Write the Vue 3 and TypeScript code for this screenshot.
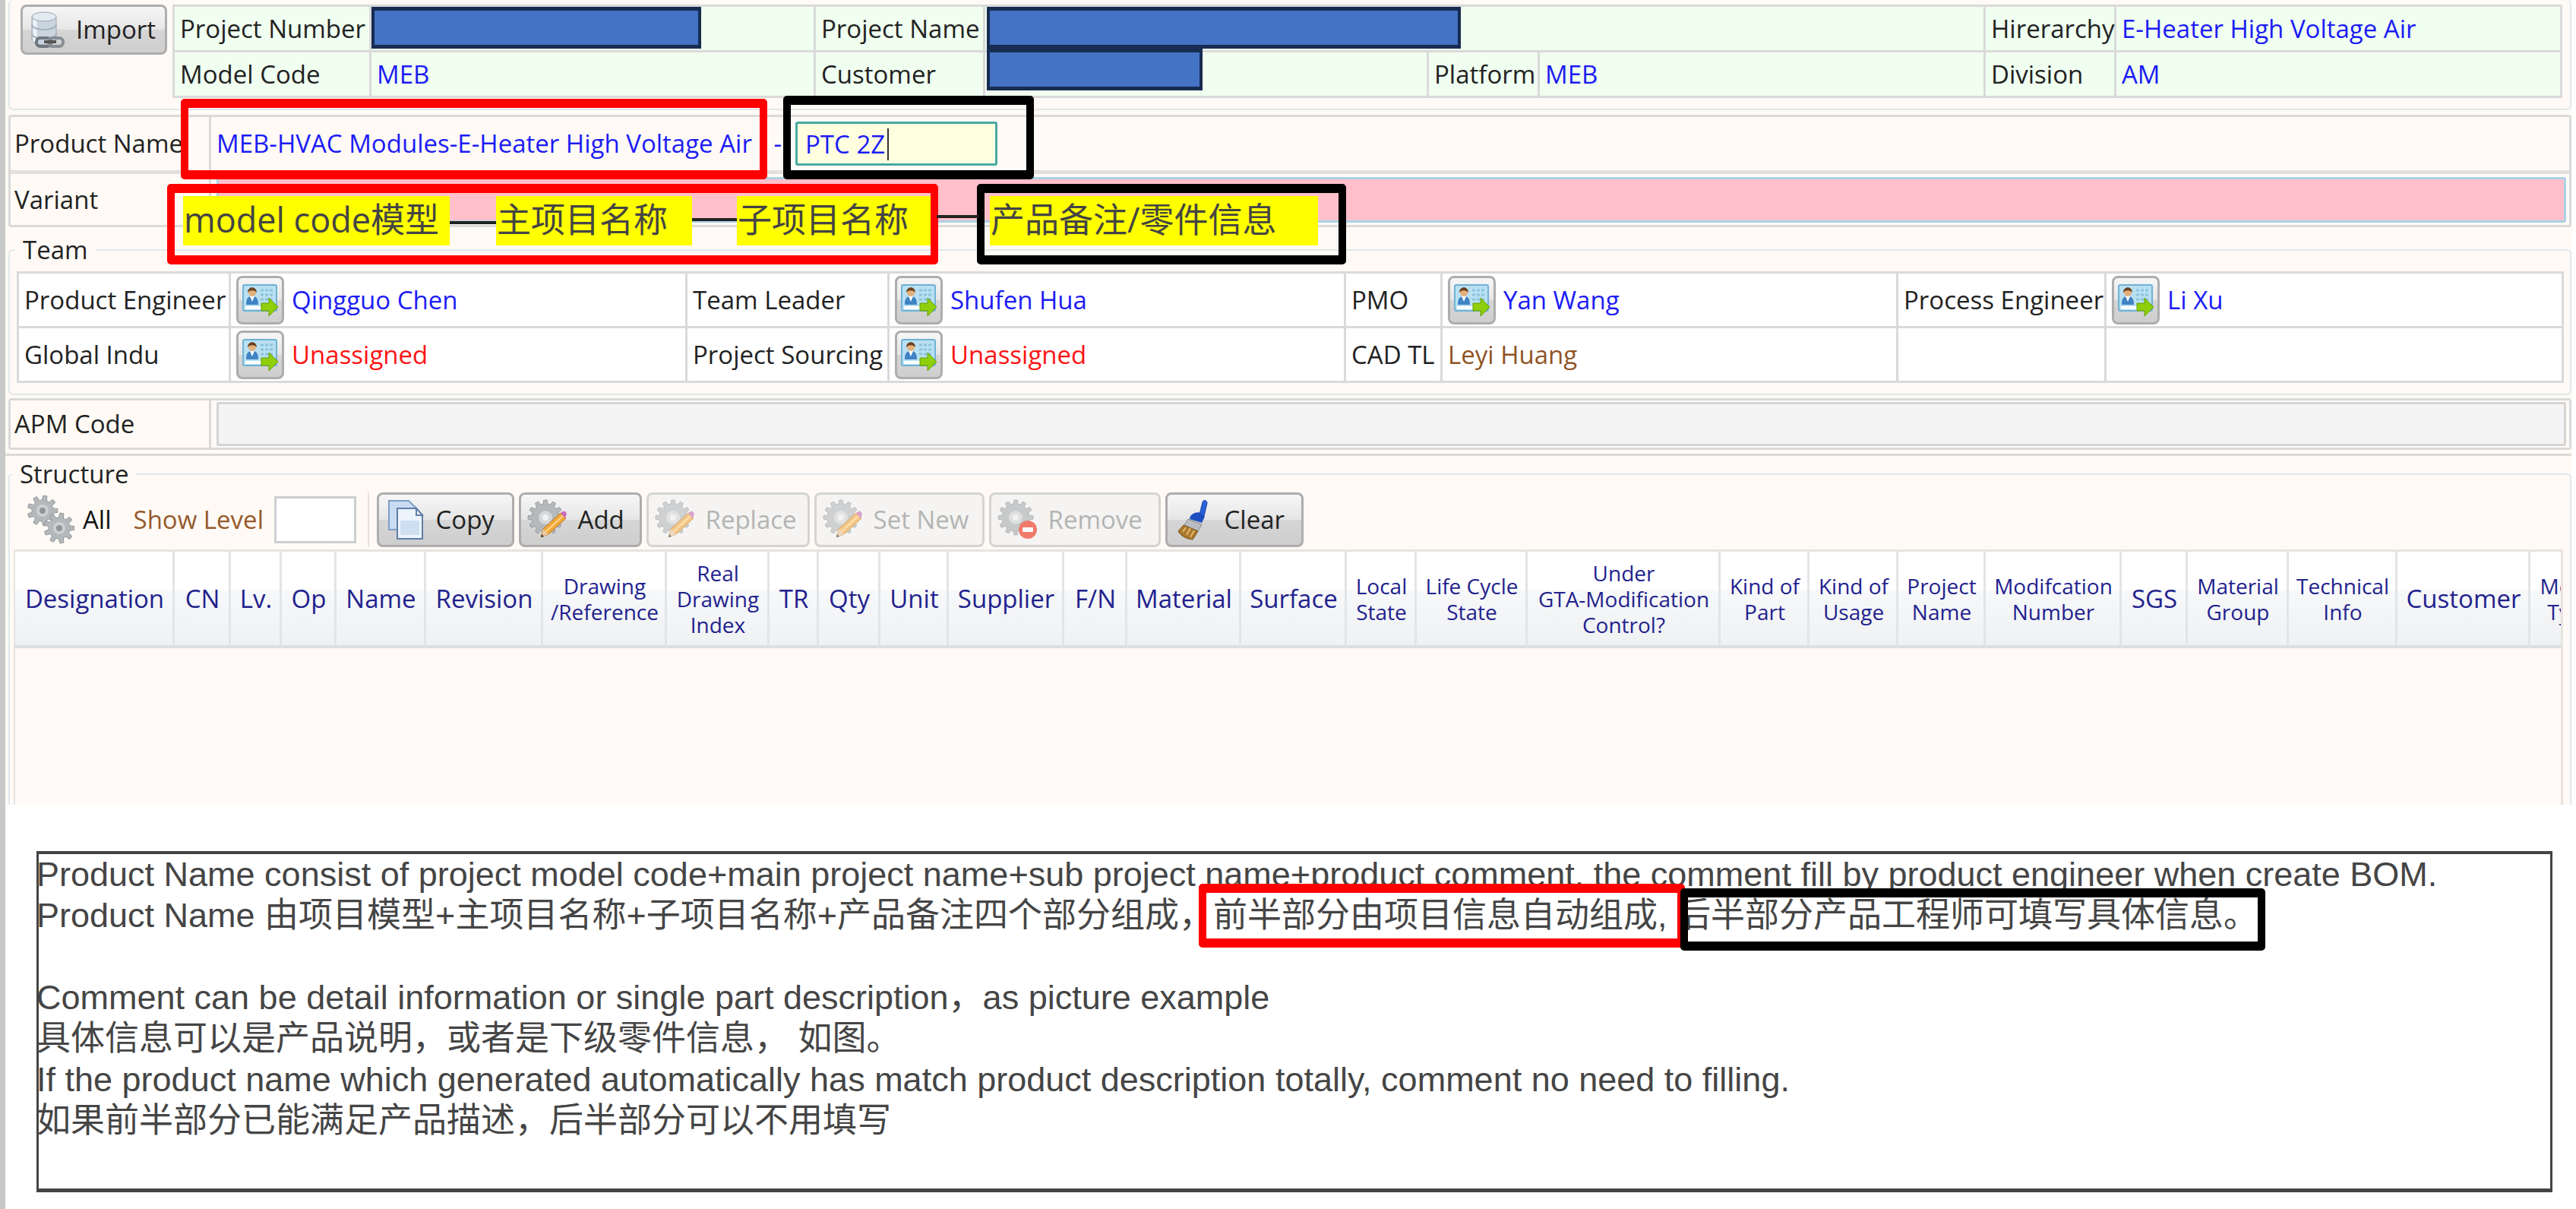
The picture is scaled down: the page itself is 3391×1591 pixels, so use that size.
<script setup lang="ts">
import { ref } from 'vue'

interface Member {
  label: string
  name: string
  tone: 'blue' | 'red' | 'brown'
  picker: boolean
}

interface Column {
  lines: string[]
  width: number
}

interface Tool {
  label: string
  icon: 'copy' | 'edit' | 'remove' | 'brush'
  disabled: boolean
  width: number
}

const comment = ref('PTC 2Z')
const variant = ref('')
const level = ref('')

const team: (Member | null)[][] = [
  [
    { label: 'Product Engineer', name: 'Qingguo Chen', tone: 'blue', picker: true },
    { label: 'Team Leader', name: 'Shufen Hua', tone: 'blue', picker: true },
    { label: 'PMO', name: 'Yan Wang', tone: 'blue', picker: true },
    { label: 'Process Engineer', name: 'Li Xu', tone: 'blue', picker: true },
  ],
  [
    { label: 'Global Indu', name: 'Unassigned', tone: 'red', picker: true },
    { label: 'Project Sourcing', name: 'Unassigned', tone: 'red', picker: true },
    { label: 'CAD TL', name: 'Leyi Huang', tone: 'brown', picker: false },
    null,
  ],
]

const projectCols = [259, 585, 223, 584, 146, 587, 172, 587]
const teamCols = [279, 601, 266, 601, 127, 600, 274, 602]

const tools: Tool[] = [
  { label: 'Copy', icon: 'copy', disabled: false, width: 181 },
  { label: 'Add', icon: 'edit', disabled: false, width: 162 },
  { label: 'Replace', icon: 'edit', disabled: true, width: 215 },
  { label: 'Set New', icon: 'edit', disabled: true, width: 224 },
  { label: 'Remove', icon: 'remove', disabled: true, width: 226 },
  { label: 'Clear', icon: 'brush', disabled: false, width: 182 },
]

const columns: Column[] = [
  { lines: ['Designation'], width: 210 },
  { lines: ['CN'], width: 74 },
  { lines: ['Lv.'], width: 67 },
  { lines: ['Op'], width: 72 },
  { lines: ['Name'], width: 118 },
  { lines: ['Revision'], width: 154 },
  { lines: ['Drawing', '/Reference'], width: 163 },
  { lines: ['Real', 'Drawing', 'Index'], width: 135 },
  { lines: ['TR'], width: 65 },
  { lines: ['Qty'], width: 81 },
  { lines: ['Unit'], width: 90 },
  { lines: ['Supplier'], width: 152 },
  { lines: ['F/N'], width: 83 },
  { lines: ['Material'], width: 150 },
  { lines: ['Surface'], width: 139 },
  { lines: ['Local', 'State'], width: 92 },
  { lines: ['Life Cycle', 'State'], width: 146 },
  { lines: ['Under', 'GTA-Modification', 'Control?'], width: 254 },
  { lines: ['Kind of', 'Part'], width: 117 },
  { lines: ['Kind of', 'Usage'], width: 117 },
  { lines: ['Project', 'Name'], width: 115 },
  { lines: ['Modifcation', 'Number'], width: 179 },
  { lines: ['SGS'], width: 87 },
  { lines: ['Material', 'Group'], width: 133 },
  { lines: ['Technical', 'Info'], width: 143 },
  { lines: ['Customer'], width: 175 },
  { lines: ['Model', 'Type'], width: 108 },
]

/* Outline of a cog: alternating outer and inner points round the centre. */
function cog(cx: number, cy: number, outer: number, inner: number, teeth: number): string {
  const step = (Math.PI * 2) / teeth
  const points: string[] = []
  for (let i = 0; i < teeth; i++) {
    const a = i * step
    const corners: [number, number][] = [
      [-0.32, inner],
      [-0.18, outer],
      [0.18, outer],
      [0.32, inner],
    ]
    for (const [k, r] of corners) {
      const t = a + k * step
      points.push(`${(cx + Math.cos(t) * r).toFixed(1)} ${(cy + Math.sin(t) * r).toFixed(1)}`)
    }
  }
  return `M${points.join('L')}Z`
}

const bigCog = cog(24, 24, 23, 18, 12)
const topCog = cog(20, 20, 20, 14, 9)
const lowCog = cog(42, 43, 20, 14, 9)
</script>

<template>
  <main class="page">
    <div class="form">
      <section class="panel project">
        <button type="button" class="btn import">
          <svg class="ico-db" viewBox="0 0 46 50" aria-hidden="true">
            <path d="M2 8v30c0 4 7 7 16 7s16-3 16-7V8z" fill="#cbd5e0" stroke="#9aa7b6" />
            <path d="M6 12v29" stroke="#eef3f8" stroke-width="5" />
            <path d="M2 18c0 4 7 7 16 7s16-3 16-7M2 30c0 4 7 7 16 7s16-3 16-7" fill="none" stroke="#a3b0bf" stroke-width="2" />
            <ellipse cx="18" cy="8" rx="16" ry="6" fill="#e3eaf1" stroke="#9aa7b6" />
            <rect x="8" y="36" width="19" height="11" rx="5" fill="none" stroke="#6f767d" stroke-width="4" />
            <rect x="24" y="36" width="19" height="11" rx="5" fill="none" stroke="#878e95" stroke-width="4" />
            <path d="M18 41h16" stroke="#555" stroke-width="4" />
          </svg>
          Import
        </button>
        <table class="cells green">
          <colgroup>
            <col v-for="(w, i) in projectCols" :key="i" :style="{ width: w + 'px' }" />
          </colgroup>
          <tbody>
            <tr>
              <th scope="row">Project Number</th>
              <td class="masked"><span class="mask mask-number"></span></td>
              <th scope="row">Project Name</th>
              <td colspan="3" class="masked"><span class="mask mask-name"></span></td>
              <th scope="row">Hirerarchy</th>
              <td class="blue">E-Heater High Voltage Air</td>
            </tr>
            <tr>
              <th scope="row">Model Code</th>
              <td class="blue">MEB</td>
              <th scope="row">Customer</th>
              <td class="masked"><span class="mask mask-customer"></span></td>
              <th scope="row">Platform</th>
              <td class="blue">MEB</td>
              <th scope="row">Division</th>
              <td class="blue">AM</td>
            </tr>
          </tbody>
        </table>
      </section>

      <section class="rows">
        <div class="row product">
          <label class="row-label" for="comment">Product Name</label>
          <div class="row-value">
            <span class="blue auto-name"><span>MEB-HVAC Modules-E-Heater High Voltage Air</span><span>-</span></span>
            <span class="comment-box">
              <input id="comment" v-model="comment" class="comment" type="text" />
              <i class="caret"></i>
            </span>
          </div>
        </div>
        <div class="row variant">
          <label class="row-label" for="variant">Variant</label>
          <div class="row-value"><input id="variant" v-model="variant" class="wide pink" type="text" /></div>
        </div>
      </section>

      <fieldset class="panel team">
        <legend>Team</legend>
        <table class="cells white">
          <colgroup>
            <col v-for="(w, i) in teamCols" :key="i" :style="{ width: w + 'px' }" />
          </colgroup>
          <tbody>
            <tr v-for="(line, r) in team" :key="r">
              <template v-for="(m, c) in line" :key="c">
                <template v-if="m">
                  <th scope="row">{{ m.label }}</th>
                  <td :class="m.tone">
                    <div class="member">
                      <button v-if="m.picker" type="button" class="btn pick" :aria-label="'Choose ' + m.label">
                        <svg class="ico-card" viewBox="0 0 48 44" aria-hidden="true">
                          <rect x="1" y="2" width="44" height="34" rx="2" fill="#b9e0f2" stroke="#6fb2d4" stroke-width="2" />
                          <rect x="4" y="30" width="38" height="4" fill="#fff" />
                          <path d="M24 9h17M24 15h17M24 21h17" stroke="#8cc4de" stroke-width="3" stroke-dasharray="4 2" />
                          <path d="M5 28c0-9 3-11 8-11s8 2 8 11z" fill="#3f83c4" />
                          <path d="M10 17l3 7 3-7z" fill="#fff" />
                          <circle cx="13" cy="12" r="5" fill="#e3b07c" />
                          <path d="M7 12c0-9 12-9 12 0-3-3-8-4-12 0z" fill="#6b4220" />
                          <path d="M25 26h10v-7l12 12-12 12v-7H25z" fill="#8fce0a" stroke="#62a005" stroke-width="1" />
                        </svg>
                      </button>
                      <span>{{ m.name }}</span>
                    </div>
                  </td>
                </template>
                <template v-else>
                  <td></td>
                  <td></td>
                </template>
              </template>
            </tr>
          </tbody>
        </table>
      </fieldset>

      <section class="rows apm-rows">
        <div class="row apm">
          <label class="row-label" for="apm">APM Code</label>
          <div class="row-value"><input id="apm" class="wide grey" type="text" disabled /></div>
        </div>
      </section>

      <div class="rule"></div>

      <fieldset class="structure">
        <legend>Structure</legend>
        <div class="toolbar">
          <button type="button" class="all">
            <svg class="ico-gears" viewBox="0 0 62 64" aria-hidden="true">
              <path :d="topCog" fill="#b4b8bb" stroke="#92979b" />
              <circle cx="20" cy="20" r="8" fill="#cdd0d2" />
              <circle cx="20" cy="20" r="4" fill="#8f9498" />
              <path :d="lowCog" fill="#b4b8bb" stroke="#92979b" />
              <circle cx="42" cy="43" r="8" fill="#cdd0d2" />
              <circle cx="42" cy="43" r="4" fill="#8f9498" />
            </svg>
            All
          </button>
          <label class="level-label" for="level">Show Level</label>
          <input id="level" v-model="level" class="level" type="text" />
          <div class="tools">
            <button
              v-for="t in tools"
              :key="t.label"
              type="button"
              class="btn tool"
              :disabled="t.disabled"
              :style="{ width: t.width + 'px' }"
            >
              <svg v-if="t.icon === 'copy'" class="ico" viewBox="0 0 52 54" aria-hidden="true">
                <path d="M5 2h26l8 8v30H5z" fill="#c9dcf3" stroke="#7f9dc4" stroke-width="2" />
                <path d="M16 12h25l8 9v31H16z" fill="#edf4fc" stroke="#5f7fa8" stroke-width="2" />
                <path d="M20 28h25v19H20z" fill="#cfdff2" />
                <path d="M41 12v9h8z" fill="#fff" stroke="#5f7fa8" stroke-width="2" />
              </svg>
              <svg v-else-if="t.icon === 'edit'" class="ico" viewBox="0 0 52 54" aria-hidden="true">
                <path :d="bigCog" fill="#b5b9bc" stroke="#999ea2" />
                <circle cx="24" cy="24" r="9" fill="#d5d7d9" />
                <circle cx="24" cy="24" r="4" fill="#f2f2f2" />
                <path d="M18 50l3-11 23-21 7 7-23 21z" fill="#f3a83a" stroke="#b9741a" />
                <path d="M24 43l23-21" stroke="#ffd58c" stroke-width="2" />
                <path d="M18 50l3-11 7 7z" fill="#e8c79a" />
                <path d="M18 50l1-4 3 3z" fill="#333" />
                <path d="M44 18l3-2c4-1 6 3 4 6l-1 3z" fill="#c86bb8" />
              </svg>
              <svg v-else-if="t.icon === 'remove'" class="ico" viewBox="0 0 52 54" aria-hidden="true">
                <path :d="bigCog" fill="#a9adb0" stroke="#8d9296" />
                <circle cx="24" cy="24" r="9" fill="#cfd2d4" />
                <circle cx="24" cy="24" r="4" fill="#f2f2f2" />
                <circle cx="40" cy="40" r="12" fill="#ee2c12" />
                <rect x="33" y="37" width="14" height="6" rx="1" fill="#fff" />
              </svg>
              <svg v-else class="ico" viewBox="0 0 52 54" aria-hidden="true">
                <path d="M34 20l4-16c1-4 6-3 6 1l-4 17z" fill="#2a62d8" stroke="#163f9c" />
                <path d="M22 22c4-4 9-6 14-4l5 5-4 8-16-5z" fill="#1d4fbf" />
                <path d="M19 26l18 7-5 9-18-8z" fill="#b9bdc2" stroke="#83888d" />
                <path d="M13 34l19 8-7 11C16 52 9 48 6 42z" fill="#a8782c" stroke="#7b541a" />
                <path d="M12 43l4-6M17 47l5-9M22 50l5-9" stroke="#e2bb6c" stroke-width="2" />
              </svg>
              {{ t.label }}
            </button>
          </div>
        </div>
        <div class="grid">
          <table class="heads">
            <colgroup>
              <col v-for="(c, i) in columns" :key="i" :style="{ width: c.width + 'px' }" />
            </colgroup>
            <thead>
              <tr>
                <th v-for="(c, i) in columns" :key="i" scope="col" :class="{ small: c.lines.length > 1 }">
                  <span v-for="l in c.lines" :key="l">{{ l }}</span>
                </th>
              </tr>
            </thead>
          </table>
        </div>
      </fieldset>
    </div>

    <section class="note">
      <p>Product Name consist of project model code+main project name+sub project name+product comment, the comment fill by product engineer when create BOM.</p>
      <p>Product Name 由项目模型+主项目名称+子项目名称+产品备注四个部分组成，前半部分由项目信息自动组成, 后半部分产品工程师可填写具体信息。</p>
      <p class="gap">Comment can be detail information or single part description，as picture example</p>
      <p>具体信息可以是产品说明，或者是下级零件信息， 如图。</p>
      <p>If the product name which generated automatically has match product description totally, comment no need to filling.</p>
      <p>如果前半部分已能满足产品描述，后半部分可以不用填写</p>
    </section>

    <!-- Call-outs drawn over the form -->
    <div class="frame red-frame f-auto"></div>
    <div class="frame f-comment"></div>
    <div class="frame red-frame f-legend"></div>
    <div class="frame f-remark"></div>
    <span class="link l-one"></span>
    <span class="link l-two"></span>
    <span class="link l-three"></span>
    <span class="tag t-model">model code模型</span>
    <span class="tag t-main">主项目名称</span>
    <span class="tag t-sub">子项目名称</span>
    <span class="tag t-remark">产品备注/零件信息</span>
    <div class="frame red-frame f-note-auto"></div>
    <div class="frame f-note-comment"></div>
  </main>
</template>

<style>
body {
  background: #fff;
}
</style>

<style scoped>
* {
  box-sizing: border-box;
}
.page {
  position: relative;
  min-height: 100vh;
  padding-bottom: 24px;
  border-left: 7px solid #c8c8c8;
  overflow: hidden;
  font-family: "Open Sans", "Noto Sans", "Noto Sans CJK SC", sans-serif;
  font-size: 33px;
  line-height: 44px;
  color: #222;
}
.form {
  margin-right: 5px;
  padding: 0 1px 0 4px;
  background: #fffaf5;
}
button,
input {
  font: inherit;
  color: inherit;
  margin: 0;
}
.blue {
  color: #1c1cf5;
}
.red {
  color: #fb1414;
}
.brown {
  color: #8f5426;
}

/* Buttons */
.btn {
  display: flex;
  align-items: center;
  border: 3px solid #adadad;
  border-radius: 8px;
  background: linear-gradient(#f6f6f6, #e6e6e6 50%, #d6d6d6 50%, #cecece);
}
.btn:disabled {
  border-color: #d6d4d2;
  background: #f5f4f2;
  color: #b4b4b4;
}
.btn:disabled svg {
  opacity: 0.6;
}
.import {
  gap: 14px;
  width: 195px;
  height: 66px;
  padding: 0 10px;
}
.ico-db {
  width: 46px;
  height: 50px;
}

/* Outlined panels */
.panel {
  margin: 0;
  border: 2px solid #e0e8ec;
  border-radius: 6px;
}
.project {
  display: flex;
  gap: 7px;
  padding: 6px 10px 14px 14px;
  border-top: 0;
}
.cells {
  flex: 1;
  width: 100%;
  table-layout: fixed;
  border-collapse: collapse;
  border: 3px solid #d6d6d6;
}
.cells th,
.cells td {
  padding: 0 0 0 7px;
  border: 3px solid #dadada;
  font-weight: 400;
  text-align: left;
  white-space: nowrap;
}
.green {
  background: #f0fff0;
}
.green tr {
  height: 60px;
}
.white {
  background: #fff;
}
.white tr {
  height: 72px;
}
.cells .masked {
  position: relative;
  padding: 0;
}
.mask {
  position: absolute;
  top: 0;
  left: 0;
  height: 55px;
  border: solid #172c51;
  border-width: 5px 4px;
  background: #4472c4;
}
.mask-number {
  width: 434px;
}
.mask-name {
  left: 2px;
  width: 624px;
}
.mask-customer {
  top: -5px;
  left: 2px;
  width: 284px;
}

/* Label and value rows */
.rows {
  margin-top: 6px;
  border: 3px solid #dadada;
  border-radius: 4px;
}
.row {
  display: flex;
  align-items: stretch;
}
.row + .row {
  border-top: 5px solid #e2e0de;
}
.row-label {
  display: flex;
  align-items: center;
  flex: none;
  width: 264px;
  padding-left: 5px;
  border-right: 3px solid #dadada;
}
.row-value {
  display: flex;
  flex: 1;
  align-items: center;
  padding: 0 4px 0 7px;
}
.product {
  height: 70px;
}
.variant {
  height: 72px;
}
.apm {
  height: 62px;
}
.auto-name {
  display: flex;
  justify-content: space-between;
  width: 744px;
  margin-right: 18px;
  white-space: nowrap;
}
.comment-box {
  position: relative;
}
.comment {
  display: block;
  width: 266px;
  height: 58px;
  padding: 0 10px;
  border: 3px solid #48aaa0;
  border-radius: 3px;
  background: #ffffe0;
  color: #1c1cf5;
}
.caret {
  position: absolute;
  top: 9px;
  left: 121px;
  width: 2px;
  height: 42px;
  background: #333;
}
.wide {
  width: 100%;
  height: 60px;
  padding: 0 12px;
  border-radius: 3px;
}
.pink {
  border: 3px solid #acd3e4;
  background: #ffc0cb;
}
.grey {
  height: 58px;
  border: 3px solid #d4d4d4;
  background: #f4f4f4;
}

/* Team */
legend {
  margin-left: -2px;
  padding: 0 10px;
  line-height: 44px;
}
.team {
  min-width: 0;
  margin-top: 8px;
  padding: 6px 10px 14px 9px;
}
.member {
  display: flex;
  align-items: center;
  gap: 10px;
}
.pick {
  justify-content: center;
  width: 63px;
  height: 64px;
  padding: 0;
}
.ico-card {
  width: 48px;
  height: 44px;
}
.apm-rows {
  margin-top: 4px;
}
.rule {
  height: 3px;
  margin: 5px 0 0 -4px;
  background: #dcdad8;
}

/* Structure */
.structure {
  min-width: 0;
  margin: 2px 0 0;
  padding: 2px 9px 0 5px;
  border: 2px solid #e0e8ec;
  border-bottom: 0;
  border-radius: 6px 6px 0 0;
}
.toolbar {
  display: flex;
  align-items: center;
  height: 72px;
  padding-left: 18px;
}
.all {
  display: flex;
  align-items: center;
  gap: 11px;
  padding: 0;
  border: 0;
  background: none;
  color: #111;
}
.ico-gears {
  width: 62px;
  height: 64px;
}
.level-label {
  margin-left: 29px;
  width: 185px;
  color: #96592c;
  white-space: nowrap;
}
.level {
  width: 108px;
  height: 62px;
  margin-right: 15px;
  padding: 0 8px;
  border: 3px solid #cccfd2;
  background: #fff;
}
.tools {
  display: flex;
  gap: 6px;
  padding-left: 10px;
  border-left: 2px solid #e4e0dc;
}
.tool {
  gap: 15px;
  height: 72px;
  padding: 0 8px;
}
.ico {
  flex: none;
  width: 52px;
  height: 54px;
}
.grid {
  height: 336px;
  margin-top: 3px;
  border: solid #e6e3e0;
  border-width: 3px 3px 0 2px;
  background: #fffaf8;
  overflow: hidden;
}
.heads {
  width: 100%;
  table-layout: fixed;
  border-collapse: separate;
  border-spacing: 0;
}
.heads th {
  height: 127px;
  padding: 0 0 0 2px;
  border-right: 3px solid #e2e4e6;
  border-bottom: 4px solid #dcdfe2;
  background: linear-gradient(#fff 40%, #f7f8f9 42%, #eff1f3);
  color: #22228e;
  font-weight: 400;
  white-space: nowrap;
}
.heads span {
  display: block;
}
.heads .small {
  font-size: 28px;
  line-height: 34px;
}

/* Explanatory note */
.note {
  margin: 61px 31px 0 41px;
  min-height: 449px;
  border: solid #444;
  border-width: 4px 3px 5px;
  font-family: "Liberation Sans", "Noto Sans CJK SC", sans-serif;
  font-size: 45px;
  line-height: 54px;
  color: #454545;
}
.note p {
  height: 54px;
  margin: 0 0 0 -3px;
  white-space: nowrap;
}
.note .gap {
  margin-top: 54px;
}

/* Call-outs */
.frame {
  position: absolute;
  border: solid #000;
  border-width: 12px 10px;
  border-radius: 5px;
}
.red-frame {
  border-color: #f00;
}
.f-auto {
  left: 231px;
  top: 130px;
  width: 772px;
  height: 106px;
}
.f-comment {
  left: 1024px;
  top: 126px;
  width: 330px;
  height: 110px;
}
.f-legend {
  left: 213px;
  top: 242px;
  width: 1015px;
  height: 106px;
}
.f-remark {
  left: 1279px;
  top: 242px;
  width: 486px;
  height: 106px;
}
.f-note-auto {
  left: 1571px;
  top: 1163px;
  width: 640px;
  height: 84px;
}
.f-note-comment {
  left: 2205px;
  top: 1169px;
  width: 770px;
  height: 82px;
}
.tag {
  position: absolute;
  top: 258px;
  height: 65px;
  padding-left: 1px;
  background: #ff0;
  color: #444;
  font-size: 45px;
  line-height: 62px;
  white-space: nowrap;
}
.t-model {
  left: 234px;
  width: 351px;
}
.t-main {
  left: 646px;
  width: 258px;
}
.t-sub {
  left: 963px;
  width: 255px;
}
.t-remark {
  left: 1296px;
  width: 432px;
}
.link {
  position: absolute;
  height: 4px;
  background: #222;
}
.l-one {
  left: 585px;
  top: 291px;
  width: 61px;
}
.l-two {
  left: 904px;
  top: 287px;
  width: 59px;
}
.l-three {
  left: 1226px;
  top: 283px;
  width: 55px;
}
</style>
